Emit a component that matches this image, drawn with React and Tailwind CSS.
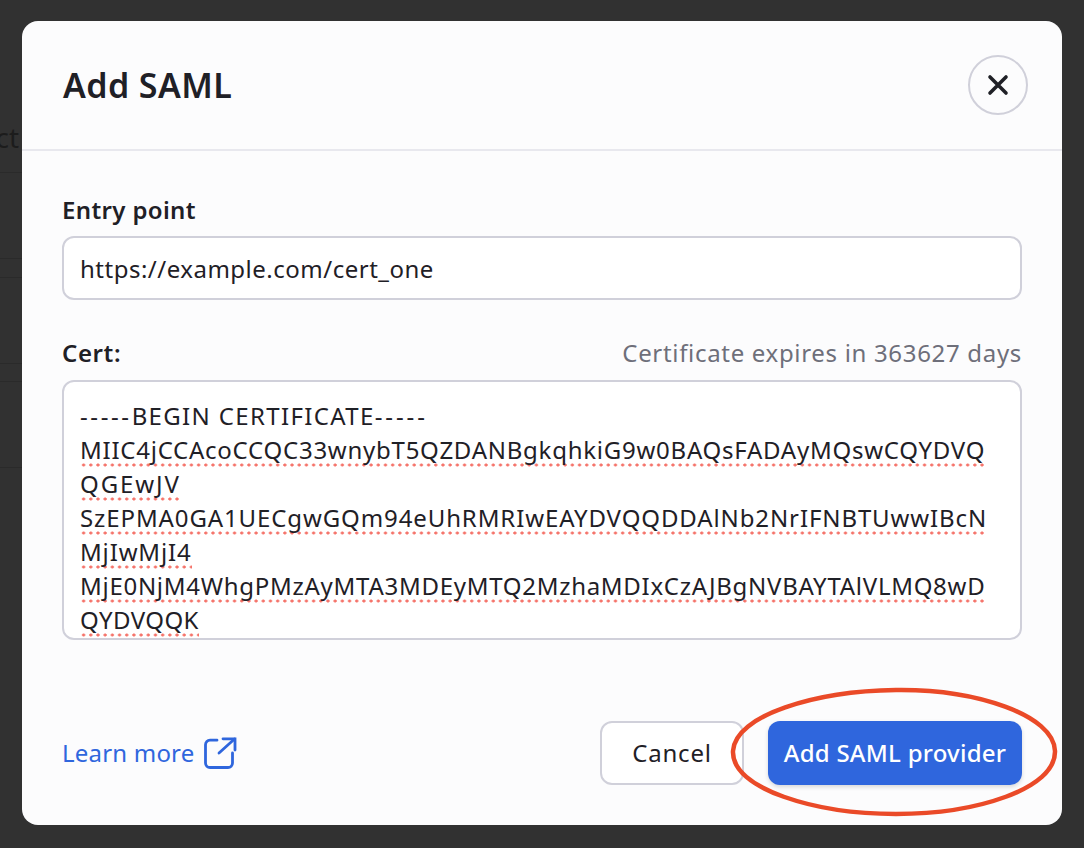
const lines = [
  ["tracking-[0.75px]", "MIIC4jCCAcoCCQC33wnybT5QZDANBgkqhkiG9w0BAQsFADAyMQswCQYDVQ"],
  ["tracking-[1.9px]", "QGEwJV"],
  ["tracking-[0.89px]", "SzEPMA0GA1UECgwGQm94eUhRMRIwEAYDVQQDDAlNb2NrIFNBTUwwIBcN"],
  ["tracking-[0.85px]", "MjIwMjI4"],
  ["tracking-[0.72px]", "MjE0NjM4WhgPMzAyMTA3MDEyMTQ2MzhaMDIxCzAJBgNVBAYTAlVLMQ8wD"],
  ["tracking-[0.43px]", "QYDVQQK"],
];

export default function App() {
  return (
    <div className="relative h-[848px] w-full overflow-hidden bg-[#313131] font-['Noto_Sans','Open_Sans',sans-serif] text-[#1f2026]">
      <div className="flex w-[22px] flex-col overflow-hidden pt-[120px] text-[28px] leading-[34px] text-[#1c1c1c]">
        <div className="flex h-[53px] justify-end border-b border-[#2a2a2a] whitespace-nowrap">
          <span className="mr-[3px]">ct</span>
        </div>
        <div className="h-[86px] border-b border-[#2a2a2a]"></div>
        <div className="h-[19px] border-b border-[#2a2a2a]"></div>
        <div className="h-[86px] border-b border-[#2a2a2a]"></div>
        <div className="h-[18px] border-b border-[#2a2a2a]"></div>
        <div className="h-[86px] border-b border-[#2a2a2a]"></div>
      </div>

      <div className="absolute top-[21px] left-[22px] flex h-[804px] w-[1040px] flex-col rounded-[16px] bg-[#fcfcfd]">
        <div className="flex h-[130px] items-center justify-between border-b-2 border-[#e8e8ee] pr-[34px] pl-[41px]">
          <h1 className="text-[34px] font-semibold tracking-[0.4px]">Add SAML</h1>
          <button className="flex h-[60px] w-[60px] items-center justify-center rounded-full border-2 border-[#d0d0da]">
            <svg width="22" height="22" viewBox="0 0 22 22" fill="none" stroke="#1f2026" strokeWidth="3.6" strokeLinecap="round">
              <path d="M3 3 L19 19 M19 3 L3 19" />
            </svg>
          </button>
        </div>

        <div className="flex flex-1 flex-col px-[40px]">
          <label className="mt-[41px] text-[24px] leading-[36px] font-semibold tracking-[0.36px]">Entry point</label>
          <div className="mt-[8px] flex h-[64px] items-center rounded-[12px] border-2 border-[#d0d0da] bg-white pt-[1px] pl-[16px] text-[24px] tracking-[0.5px]">
            https://example.com/cert_one
          </div>

          <div className="mt-[35px] flex items-center justify-between">
            <span className="text-[24px] leading-[36px] font-semibold tracking-[0.6px]">Cert:</span>
            <span className="text-[24px] leading-[36px] tracking-[0.68px] text-[#6e6f7a]">Certificate expires in 363627 days</span>
          </div>
          <div className="mt-[9px] h-[260px] overflow-hidden rounded-[12px] border-2 border-[#d0d0da] bg-white pt-[17px] pl-[16px] text-[24px] leading-[34px] whitespace-nowrap">
            <div className="h-[34px]">
              <span className="tracking-[2.6px]">-----</span>
              <span className="tracking-[1.35px]">BEGIN CERTIFICATE</span>
              <span className="tracking-[2.9px]">-----</span>
            </div>
            {lines.map(([track, t]) => (
              <div key={t} className="h-[34px]">
                <span className={`${track} bg-[radial-gradient(circle_at_center,#f5736a_1.3px,transparent_1.8px)] bg-[length:7.2px_4px] bg-[position:0_100%] bg-repeat-x pb-[1px]`}>
                  {t}
                </span>
              </div>
            ))}
          </div>

          <div className="mt-[81px] flex items-center justify-between">
            <a className="flex items-center gap-[9px] text-[24px] tracking-[0.2px] text-[#2f66dd]">
              Learn more
              <svg width="33" height="32" viewBox="0 0 33 32" fill="none" stroke="#2f66dd" strokeWidth="2.8" strokeLinecap="round" strokeLinejoin="miter">
                <path d="M13 3.2 H6 a4.5 4.5 0 0 0 -4.5 4.5 V26 a4.5 4.5 0 0 0 4.5 4.5 H24 a4.5 4.5 0 0 0 4.5 -4.5 V16" />
                <path d="M15 16 L30.5 2" />
                <path d="M19 1.8 H31 V13" />
              </svg>
            </a>
            <div className="flex items-center gap-[24px]">
              <button className="h-[64px] w-[144px] rounded-[12px] border-2 border-[#d0d0da] bg-white text-[24px] tracking-[0.8px]">Cancel</button>
              <button className="h-[64px] w-[254px] rounded-[12px] bg-[#2f66dd] text-[24px] font-medium tracking-[0.24px] text-white shadow-[0_2px_4px_rgba(0,0,0,0.15)]">Add SAML provider</button>
            </div>
          </div>
        </div>
      </div>

      <svg className="absolute top-[685px] left-[726px]" width="332" height="134" viewBox="0 0 332 134" fill="none">
        <path d="M7 66 C9 30 90 6 170 5 C250 4 328 30 329 66 C330 104 250 129 170 129 C90 129 5 104 7 66 Z" stroke="#ea4a28" strokeWidth="4.5" />
      </svg>
    </div>
  );
}
